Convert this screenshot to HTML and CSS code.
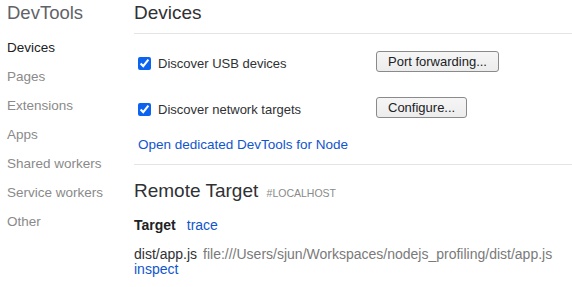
FILE: index.html
```html
<!DOCTYPE html>
<html lang="en">
<head>
    <meta charset="UTF-8">
    <meta name="viewport" content="width=device-width, initial-scale=1.0">
    <title>Inspect with Chrome Developer Tools</title>
    <link rel="stylesheet" href="styles.css">
</head>
<body>

<div class="page">
    <nav class="sidebar">
        <h1 class="brand">DevTools</h1>
        <ul class="nav">
            <li class="selected">Devices</li>
            <li>Pages</li>
            <li>Extensions</li>
            <li>Apps</li>
            <li>Shared workers</li>
            <li>Service workers</li>
            <li>Other</li>
        </ul>
    </nav>

    <main class="content">
        <header class="content-header">
            <h2>Devices</h2>
        </header>

        <div class="options">
            <div class="option-row">
                <label class="option"><input type="checkbox" checked>Discover USB devices</label>
                <button type="button">Port forwarding...</button>
            </div>
            <div class="option-row">
                <label class="option"><input type="checkbox" checked>Discover network targets</label>
                <button type="button">Configure...</button>
            </div>
        </div>

        <a class="node-link" href="#">Open dedicated DevTools for Node</a>

        <section class="remote">
            <h2>Remote Target <span class="host">#LOCALHOST</span></h2>
            <div class="target-head">
                <span class="target-title">Target</span>
                <a href="#">trace</a>
            </div>
            <div class="target">
                <span class="target-name">dist/app.js</span>
                <span class="target-url">file:///Users/sjun/Workspaces/nodejs_profiling/dist/app.js</span>
            </div>
            <div class="actions">
                <a href="#">inspect</a>
            </div>
        </section>
    </main>
</div>

</body>
</html>
```

FILE: styles.css
```css
body {
    margin: 0;
    padding: 0;
    background: #ffffff;
    color: #303134;
    font-family: 'Liberation Sans', Arial, sans-serif;
    font-size: 13px;
}

a {
    color: #1155cc;
    text-decoration: none;
}

.page {
    display: flex;
}

.sidebar {
    width: 127px;
    flex-shrink: 0;
    padding-left: 7px;
}

.brand {
    margin: 1px 0 9px;
    font-size: 18.5px;
    font-weight: normal;
    line-height: 23px;
    color: #5f6368;
}

.nav {
    list-style: none;
    margin: 0;
    padding: 0;
}

.nav li {
    font-size: 13.5px;
    line-height: 29px;
    color: #8a8a8a;
    white-space: nowrap;
}

.nav li.selected {
    color: #202124;
}

.content {
    flex: 1;
}

.content-header {
    border-bottom: 1px solid #e4e4e4;
}

.content-header h2,
.remote h2 {
    margin: 0;
    font-size: 19px;
    font-weight: normal;
    line-height: 23px;
    color: #303134;
}

.content-header h2 {
    margin-top: 1px;
    padding-bottom: 9px;
}

.options {
    display: flex;
    flex-direction: column;
    gap: 25px;
    margin-top: 17px;
}

.option-row {
    display: grid;
    grid-template-columns: 242px auto;
    align-items: center;
    justify-items: start;
    height: 21px;
}

.option {
    display: flex;
    align-items: center;
    padding-top: 3px;
}

.option input {
    width: 13px;
    height: 13px;
    margin: 0 7px 0 4px;
    accent-color: #0b63f0;
}

.option-row button {
    height: 21px;
    padding: 0 11px;
    border: 1px solid #8a8a8a;
    border-radius: 3px;
    background: linear-gradient(#f6f6f6, #ececec);
    color: #202124;
    font-family: 'Liberation Sans', Arial, sans-serif;
    font-size: 13px;
}

.node-link {
    display: block;
    margin-top: 19px;
    padding: 0 0 11px 4px;
    font-size: 13.5px;
    line-height: 16px;
    border-bottom: 1px solid #e4e4e4;
}

.remote {
    padding-top: 14px;
}

.remote h2 .host {
    font-size: 10.5px;
    line-height: 1;
    color: #8a8a8a;
    margin-left: 3px;
}

.target-head {
    display: flex;
    gap: 11px;
    margin-top: 15px;
    font-size: 14px;
    line-height: 16px;
}

.target-title {
    font-weight: bold;
    color: #202124;
}

.target {
    display: flex;
    gap: 6px;
    margin-top: 14px;
    font-size: 14px;
    line-height: 15px;
    white-space: nowrap;
}

.target-url {
    color: #7a7a7a;
}

.actions {
    font-size: 14px;
    line-height: 15px;
}
```
